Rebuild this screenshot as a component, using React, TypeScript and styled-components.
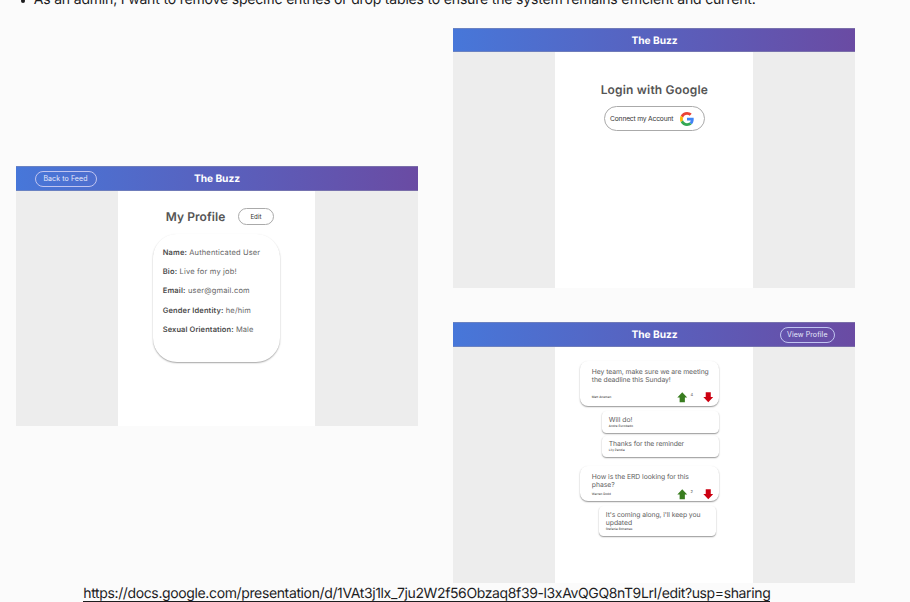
import React from "react";
import styled, { createGlobalStyle } from "styled-components";

const Global = createGlobalStyle`
  *, *::before, *::after { box-sizing: border-box; }
  body {
    margin: 0;
    background: #fbfbfb;
    font-family: Inter, "Liberation Sans", sans-serif;
    text-rendering: geometricPrecision;
  }
  p, h1, h2, ul { margin: 0; padding: 0; }
`;

const Page = styled.main`
  width: 910px;
  height: 602px;
  overflow: hidden;
  display: flex;
  flex-direction: column;
  background: #fbfbfb;
`;

const Stories = styled.ul`
  flex: none;
  height: 28px;
  margin-top: -10px;
  margin-bottom: 10px;
  padding-left: 21px;
  list-style: none;
  font-size: 14px;
  line-height: 20px;
  letter-spacing: -0.175px;
  color: #1d1d1f;
  white-space: nowrap;
`;

const Story = styled.li`
  display: flex;
  align-items: center;
  gap: 8.3px;
  &::before {
    content: "";
    width: 4.4px;
    height: 4.4px;
    margin-top: 2px;
    border-radius: 50%;
    background: #1d1d1f;
  }
`;

const Boards = styled.section`
  flex: none;
  height: 555px;
  padding-left: 15.5px;
  display: grid;
  grid-template-columns: 402.5px 402px;
  column-gap: 35.3px;
  align-items: start;
`;

const LeftBoard = styled.div`
  padding-top: 138.3px;
`;

const RightBoard = styled.div`
  display: grid;
  row-gap: 34.4px;
`;

const Screen = styled.article<{ $height?: number }>`
  height: ${(p) => p.$height ?? 260}px;
  display: flex;
  flex-direction: column;
  background: #ededed;
  color: #555;
`;

const TopBar = styled.header`
  flex: none;
  height: 24.4px;
  display: grid;
  grid-template-columns: 1fr auto 1fr;
  align-items: center;
  padding: 0 20.5px 0 19px;
  background: linear-gradient(90deg, #4777d9, #6a4ba3);
  box-shadow: inset 0 0.5px #8b8fae, inset 0 -0.5px #8b8fae;
`;

const Brand = styled.h1`
  grid-column: 2;
  padding: 1px 0 0 2px;
  font-size: 10.2px;
  line-height: 24px;
  font-weight: 700;
  letter-spacing: -0.05px;
  color: #fff;
`;

const NavButton = styled.button<{ $end?: boolean; $width: number }>`
  grid-row: 1;
  grid-column: ${(p) => (p.$end ? 3 : 1)};
  justify-self: ${(p) => (p.$end ? "end" : "start")};
  width: ${(p) => p.$width}px;
  height: 16.5px;
  padding: 0.5px 0 0;
  border: 1px solid #c0c4f0;
  border-radius: 9px;
  background: transparent;
  color: #e6e8fb;
  font: 400 7px/14px Inter, sans-serif;
  letter-spacing: 0.1px;
`;

const Column = styled.div<{ $top: number }>`
  flex: 1;
  width: 197.7px;
  margin-left: 102.2px;
  padding-top: ${(p) => p.$top}px;
  background: #fff;
`;

const LoginPanel = styled.div`
  display: flex;
  flex-direction: column;
  align-items: center;
`;

const Heading = styled.h2<{ $spacing: number }>`
  font-size: 12px;
  line-height: 18px;
  font-weight: 600;
  letter-spacing: ${(p) => p.$spacing}px;
  color: #555;
  white-space: nowrap;
`;

const GoogleButton = styled.button`
  width: 101.5px;
  height: 24.5px;
  margin-top: 7px;
  padding: 1px 10px 0 5.5px;
  display: flex;
  align-items: center;
  justify-content: space-between;
  border: 1px solid #aaa;
  border-radius: 13px;
  background: #fff;
  color: #333;
  font: 400 6.7px/12px Inter, sans-serif;
  letter-spacing: -0.18px;
  white-space: nowrap;
`;

const ProfileHead = styled.div`
  display: flex;
  align-items: center;
  padding-left: 48px;
  gap: 12.5px;
`;

const EditButton = styled.button`
  width: 36px;
  height: 17px;
  padding: 0.5px 0 0;
  border: 1px solid #aaa;
  border-radius: 9px;
  background: #fff;
  color: #333;
  font: 400 6.2px/14px Inter, sans-serif;
`;

const ProfileCard = styled.section`
  width: 127px;
  height: 127.5px;
  margin: 8.6px 0 0 35.3px;
  padding: 8.4px 0 0 9.7px;
  border-radius: 24px;
  background: #fff;
  box-shadow: 0 1px 1.6px rgba(0, 0, 0, 0.36);
`;

const Field = styled.p<{ $spacing: number }>`
  font-size: 7.5px;
  line-height: 19.3px;
  letter-spacing: ${(p) => p.$spacing}px;
  color: #666;
  white-space: nowrap;
  b { font-weight: 600; color: #4c4c4c; }
`;

const Bubble = styled.section<{ $x: number; $gap: number; $w: number; $h: number; $reply?: boolean }>`
  width: ${(p) => p.$w}px;
  height: ${(p) => p.$h}px;
  margin: ${(p) => p.$gap}px 0 0 ${(p) => p.$x}px;
  padding: ${(p) => (p.$reply ? "4.2px 0 0 6.8px" : "6.9px 6px 0 11.8px")};
  border-radius: ${(p) => (p.$reply ? 4.5 : 8)}px;
  background: #fff;
  box-shadow: 0 1px 1.5px rgba(0, 0, 0, 0.42);
`;

const Message = styled.p<{ $spacing: number }>`
  font-size: 6.8px;
  line-height: 8.2px;
  letter-spacing: ${(p) => p.$spacing}px;
  color: #606060;
  white-space: nowrap;
`;

const Author = styled.p`
  font-size: 3px;
  line-height: 4.5px;
  letter-spacing: 0.06px;
  color: #222;
  white-space: nowrap;
`;

const PostFoot = styled.div<{ $top: number }>`
  display: flex;
  align-items: center;
  height: 11px;
  margin-top: ${(p) => p.$top}px;
`;

const Votes = styled.div`
  margin-left: auto;
  display: flex;
  align-items: center;
`;

const Count = styled.span`
  width: 15px;
  padding-left: 2.5px;
  align-self: flex-start;
  font-size: 4px;
  line-height: 6px;
  color: #666;
`;

const LinkRow = styled.footer`
  flex: none;
  height: 19px;
  padding-left: 83.3px;
  display: flex;
`;

const DocLink = styled.a`
  height: 19px;
  padding-top: 1px;
  border-bottom: 1px solid #1d1d1f;
  color: #1d1d1f;
  font-size: 14px;
  line-height: 20px;
  letter-spacing: -0.37px;
  text-decoration: none;
  white-space: nowrap;
`;

const GoogleLogo = () => (
  <svg width="14" height="14" viewBox="0 0 48 48" aria-label="Google">
    <path fill="#EA4335" d="M24 9.5c3.54 0 6.71 1.22 9.21 3.6l6.85-6.85C35.9 2.38 30.47 0 24 0 14.62 0 6.51 5.38 2.56 13.22l7.98 6.19C12.43 13.72 17.74 9.5 24 9.5z" />
    <path fill="#4285F4" d="M46.98 24.55c0-1.57-.15-3.09-.38-4.55H24v9.02h12.94c-.58 2.96-2.26 5.48-4.78 7.18l7.73 6c4.51-4.18 7.09-10.36 7.09-17.65z" />
    <path fill="#FBBC05" d="M10.53 28.59c-.48-1.45-.76-2.99-.76-4.59s.27-3.14.76-4.59l-7.98-6.19C.92 16.46 0 20.12 0 24s.92 7.54 2.56 10.78l7.97-6.19z" />
    <path fill="#34A853" d="M24 48c6.48 0 11.93-2.13 15.89-5.81l-7.73-6c-2.15 1.45-4.92 2.3-8.16 2.3-6.26 0-11.57-4.22-13.47-9.91l-7.98 6.19C6.51 42.62 14.62 48 24 48z" />
  </svg>
);

const Arrow = ({ down = false }: { down?: boolean }) => (
  <svg width="10.5" height="10.5" viewBox="0 0 10 10">
    {down ? (
      <path fill="#cc0011" d="M2.6 .3h4.8v4.5h2.3L5 9.7.3 4.8h2.3z" />
    ) : (
      <path fill="#397d20" d="M5 .3l4.7 4.9H7.5v4.5h-5V5.2H.3z" />
    )}
  </svg>
);

type Line = { text: string; spacing: number };

const Post = ({ gap, height, footTop, lines, author, votes }: {
  gap: number; height: number; footTop: number; lines: Line[]; author: string; votes: number;
}) => (
  <Bubble $x={24.5} $gap={gap} $w={139.5} $h={height}>
    {lines.map((l) => <Message key={l.text} $spacing={l.spacing}>{l.text}</Message>)}
    <PostFoot $top={footTop}>
      <Author>{author}</Author>
      <Votes><Arrow /><Count>{votes}</Count><Arrow down /></Votes>
    </PostFoot>
  </Bubble>
);

const Reply = ({ x = 46.5, gap, height = 21.5, lines, author }: {
  x?: number; gap: number; height?: number; lines: Line[]; author: string;
}) => (
  <Bubble $reply $x={x} $gap={gap} $w={117.5} $h={height}>
    {lines.map((l) => <Message key={l.text} $spacing={l.spacing}>{l.text}</Message>)}
    <Author>{author}</Author>
  </Bubble>
);

export default function App() {
  return (
    <>
      <Global />
      <Page>
        <Stories>
          <Story>As an admin, I want to remove specific entries or drop tables to ensure the system remains efficient and current.</Story>
        </Stories>
        <Boards>
          <LeftBoard>
            <Screen>
              <TopBar><NavButton $width={62}>Back to Feed</NavButton><Brand>The Buzz</Brand></TopBar>
              <Column $top={17.1}>
                <ProfileHead>
                  <Heading $spacing={0.08}>My Profile</Heading>
                  <EditButton>Edit</EditButton>
                </ProfileHead>
                <ProfileCard>
                  <Field $spacing={0.15}><b>Name:</b> Authenticated User</Field>
                  <Field $spacing={0.18}><b>Bio:</b> Live for my job!</Field>
                  <Field $spacing={0.18}><b>Email:</b> user@gmail.com</Field>
                  <Field $spacing={0.14}><b>Gender Identity:</b> he/him</Field>
                  <Field $spacing={0.1}><b>Sexual Orientation:</b> Male</Field>
                </ProfileCard>
              </Column>
            </Screen>
          </LeftBoard>
          <RightBoard>
            <Screen>
              <TopBar><Brand>The Buzz</Brand></TopBar>
              <Column $top={28.8}>
                <LoginPanel>
                  <Heading $spacing={0.18}>Login with Google</Heading>
                  <GoogleButton>Connect my Account<GoogleLogo /></GoogleButton>
                </LoginPanel>
              </Column>
            </Screen>
            <Screen $height={260.6}>
              <TopBar><Brand>The Buzz</Brand><NavButton $end $width={55}>View Profile</NavButton></TopBar>
              <Column $top={14.1}>
                <Post gap={0} height={45} footTop={8} author="Matt Aneman" votes={4}
                  lines={[{ text: "Hey team, make sure we are meeting", spacing: -0.06 }, { text: "the deadline this Sunday!", spacing: -0.08 }]} />
                <Reply gap={5.5} author="Andre Escobedo" lines={[{ text: "Will do!", spacing: 0 }]} />
                <Reply gap={3} author="Lily Pandia" lines={[{ text: "Thanks for the reminder", spacing: -0.08 }]} />
                <Post gap={8.5} height={35.5} footTop={0} author="Warren Rodd" votes={2}
                  lines={[{ text: "How is the ERD looking for this", spacing: -0.05 }, { text: "phase?", spacing: 0 }]} />
                <Reply x={43.5} gap={5} height={29.5} author="Stefania Bohemas"
                  lines={[{ text: "It's coming along, i'll keep you", spacing: -0.08 }, { text: "updated", spacing: -0.03 }]} />
              </Column>
            </Screen>
          </RightBoard>
        </Boards>
        <LinkRow>
          <DocLink>https://docs.google.com/presentation/d/1VAt3j1lx_7ju2W2f56Obzaq8f39-l3xAvQGQ8nT9LrI/edit?usp=sharing</DocLink>
        </LinkRow>
      </Page>
    </>
  );
}
